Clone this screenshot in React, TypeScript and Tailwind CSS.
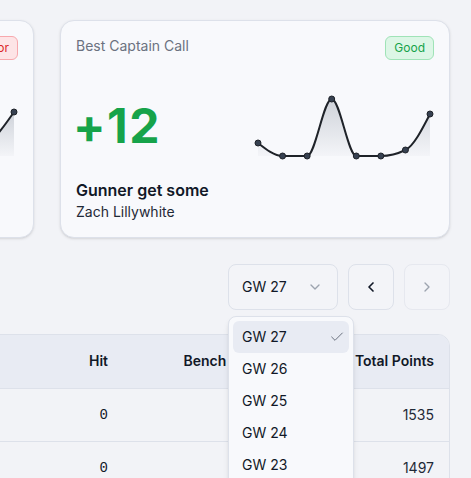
import { Check, ChevronDown, ChevronLeft, ChevronRight } from 'lucide-react'

type Pt = [number, number]

// d3-style monotoneX curve so the sparkline never overshoots
function monotonePath(pts: Pt[]) {
  const n = pts.length
  const dx: number[] = []
  const m: number[] = []
  for (let i = 0; i < n - 1; i++) {
    dx.push(pts[i + 1][0] - pts[i][0])
    m.push((pts[i + 1][1] - pts[i][1]) / dx[i])
  }
  const t: number[] = new Array(n).fill(0)
  for (let i = 1; i < n - 1; i++) {
    if (m[i - 1] * m[i] <= 0) t[i] = 0
    else {
      const h0 = dx[i - 1], h1 = dx[i]
      const p = (m[i - 1] * h1 + m[i] * h0) / (h0 + h1)
      t[i] = (Math.sign(m[i - 1]) + Math.sign(m[i])) * Math.min(Math.abs(m[i - 1]), Math.abs(m[i]), 0.5 * Math.abs(p))
    }
  }
  t[0] = n > 1 ? (3 * m[0] - t[1]) / 2 : 0
  t[n - 1] = n > 1 ? (3 * m[n - 2] - t[n - 2]) / 2 : 0
  let d = `M${pts[0][0]},${pts[0][1]}`
  for (let i = 0; i < n - 1; i++) {
    const h = dx[i] / 3
    d += ` C${pts[i][0] + h},${pts[i][1] + h * t[i]} ${pts[i + 1][0] - h},${pts[i + 1][1] - h * t[i + 1]} ${pts[i + 1][0]},${pts[i + 1][1]}`
  }
  return d
}

function Sparkline({ ys, id }: { ys: number[]; id: string }) {
  const pts: Pt[] = ys.map((y, i) => [4 + (i * 172) / (ys.length - 1), y])
  const line = monotonePath(pts)
  const area = `${line} L176,63 L4,63 Z`
  return (
    <svg width="180" height="66" viewBox="0 0 180 66" className="shrink-0 overflow-visible">
      <defs>
        <linearGradient id={id} x1="0" y1="0" x2="0" y2="1">
          <stop offset="0%" stopColor="#9ca3af" stopOpacity="0.45" />
          <stop offset="100%" stopColor="#9ca3af" stopOpacity="0.05" />
        </linearGradient>
      </defs>
      <path d={area} fill={`url(#${id})`} />
      <path d={line} fill="none" stroke="#1f2329" strokeWidth="2" />
      {pts.map(([x, y], i) => (
        <circle key={i} cx={x} cy={y} r="3" fill="#374151" stroke="#1f2329" strokeWidth="1" />
      ))}
    </svg>
  )
}

function StatCard(props: {
  title: string
  badge: string
  good: boolean
  value: string
  name: string
  manager: string
  ys: number[]
  id: string
}) {
  return (
    <div className="flex flex-col rounded-[14px] border border-[#dde1ea] bg-[#f8f9fc] p-[15px] shadow-sm">
      <div className="flex h-[25px] items-start justify-between">
        <span className="text-sm text-[#6b7280]">{props.title}</span>
        <span
          className={
            props.good
              ? 'rounded-md border border-[#9fe3b7] bg-[#dcf6e6] px-[8px] py-[3px] text-xs text-[#16a34a]'
              : 'rounded-md border border-[#f7a8ad] bg-[#fde4e6] px-[8px] py-[3px] text-xs text-[#dc2626]'
          }
        >
          {props.badge}
        </span>
      </div>
      <div className="mt-[32px] flex h-[66px] items-center justify-between">
        <span
          className={
            props.good
              ? 'ml-[-3px] text-5xl leading-none font-bold tracking-[0.03em] text-[#16a34a]'
              : 'ml-[-3px] text-5xl leading-none font-bold tracking-[0.03em] text-[#dc2626]'
          }
        >
          {props.value}
        </span>
        <Sparkline ys={props.ys} id={props.id} />
      </div>
      <p className="mt-[19px] text-base leading-6 font-semibold text-[#111827]">{props.name}</p>
      <p className="text-sm text-[#1f2937]">{props.manager}</p>
    </div>
  )
}

const weeks = ['GW 27', 'GW 26', 'GW 25', 'GW 24', 'GW 23', 'GW 22']

const rows = [
  { rank: 1, manager: 'Gunner get some', gw: 78, hit: 0, bench: 6, total: 1535 },
  { rank: 2, manager: 'Salah Fingers', gw: 64, hit: 0, bench: 9, total: 1497 },
]

export default function App() {
  return (
    <div className="min-h-screen overflow-hidden bg-[#f2f3f7] font-['Inter',sans-serif] text-[#1f2937]">
      <div className="ml-[-356px] w-[806px] pt-5">
        <div className="grid grid-cols-2 gap-[26px]">
          <StatCard
            title="Worst Captain Call"
            badge="Poor"
            good={false}
            value="-9"
            name="Salah Fingers"
            manager="Dan Whitmore"
            ys={[30, 63, 63, 45, 63, 63, 50, 19]}
            id="spark-a"
          />
          <StatCard
            title="Best Captain Call"
            badge="Good"
            good
            value="+12"
            name="Gunner get some"
            manager="Zach Lillywhite"
            ys={[50, 63, 63, 6, 63, 63, 57, 21]}
            id="spark-b"
          />
        </div>

        <div className="mt-[26px] flex justify-end gap-[10px]">
          <div className="relative">
            <button className="flex h-[46px] w-[110px] items-center justify-between rounded-lg border border-[#dde1ea] bg-[#f3f4f8] pr-[14px] pl-[13px] text-sm text-[#111827]">
              GW 27
              <ChevronDown size={16} className="text-[#9ca3af]" />
            </button>
            <div className="absolute top-[52px] left-0 z-10 w-[126px] rounded-lg border border-[#dde1ea] bg-[#f8f9fc] p-[4px] shadow-md">
              {weeks.map((w, i) => (
                <div
                  key={w}
                  className={
                    i === 0
                      ? 'flex h-8 items-center justify-between rounded-md bg-[#e8ebf3] pr-[4px] pl-[9px] text-sm text-[#111827]'
                      : 'flex h-8 items-center justify-between rounded-md pr-[4px] pl-[9px] text-sm text-[#111827]'
                  }
                >
                  {w}
                  {i === 0 && <Check size={16} strokeWidth={1.5} className="text-[#6b7280]" />}
                </div>
              ))}
            </div>
          </div>
          <button className="flex h-[46px] w-[46px] items-center justify-center rounded-lg border border-[#dde1ea] bg-[#f3f4f8] text-[#111827]">
            <ChevronLeft size={16} strokeWidth={2.5} />
          </button>
          <button className="flex h-[46px] w-[46px] items-center justify-center rounded-lg border border-[#e6e8ef] bg-[#f3f4f8] text-[#9ca3af]">
            <ChevronRight size={16} />
          </button>
        </div>

        <div className="mt-[24px] overflow-hidden rounded-xl border border-[#dde1ea]">
          <table className="w-full table-fixed border-collapse text-sm">
            <colgroup>
              <col className="w-[80px]" />
              <col className="w-[189px]" />
              <col className="w-[100px]" />
              <col className="w-[110px]" />
              <col className="w-[164px]" />
              <col className="w-[163px]" />
            </colgroup>
            <thead>
              <tr className="h-[53px] bg-[#e8ebf3] text-[#111827]">
                <th className="px-4 text-left font-semibold">#</th>
                <th className="px-4 text-left font-semibold">Manager</th>
                <th className="px-4 text-right font-semibold">GW Points</th>
                <th className="px-4 text-right font-semibold">Hit</th>
                <th className="px-4 text-right font-semibold">Bench Points</th>
                <th className="pr-[17px] pl-4 text-right font-semibold">Total Points</th>
              </tr>
            </thead>
            <tbody>
              {rows.map(r => (
                <tr key={r.rank} className="h-[53px] border-t border-[#dde1ea] bg-[#f2f3f7] text-[#1f2937]">
                  <td className="px-4">{r.rank}</td>
                  <td className="px-4">{r.manager}</td>
                  <td className="px-4 text-right">{r.gw}</td>
                  <td className="px-4 text-right font-['Liberation_Mono',monospace] text-sm text-[#111827]">{r.hit}</td>
                  <td className="px-4 text-right">{r.bench}</td>
                  <td className="pr-[17px] pl-4 text-right">{r.total}</td>
                </tr>
              ))}
            </tbody>
          </table>
        </div>
      </div>
    </div>
  )
}
